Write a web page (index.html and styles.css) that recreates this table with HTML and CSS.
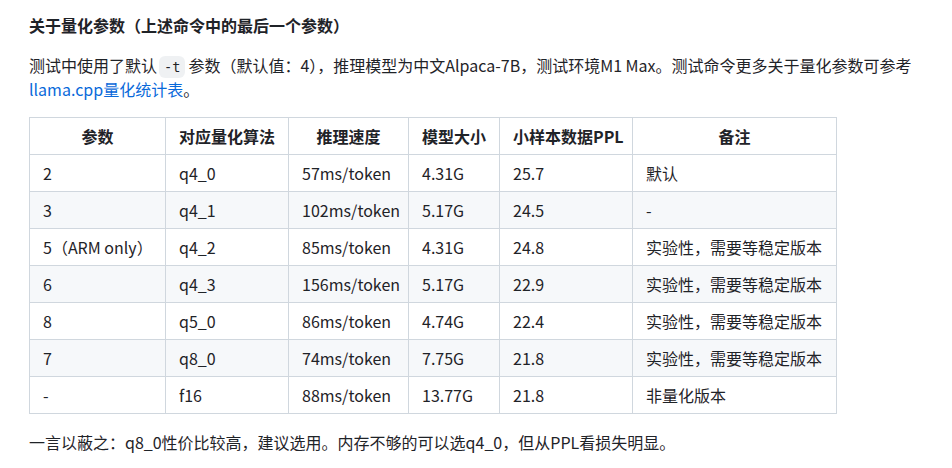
FILE: index.html
```html
<!DOCTYPE html>
<html lang="zh">
<head>
<meta charset="utf-8">
<link rel="stylesheet" href="styles.css">
</head>
<body>
<div class="markdown">
  <h4 class="title">关于量化参数（上述命令中的最后一个参数）</h4>
  <p class="para">测试中使用了默认<code class="code">-t</code>参数（默认值：4），推理模型为中文Alpaca-7B，测试环境M1 Max。测试命令更多关于量化参数可参考<a class="link" href="#">llama.cpp量化统计表</a>。</p>
  <table class="tbl">
    <colgroup>
      <col class="c1"><col class="c2"><col class="c3"><col class="c4"><col class="c5"><col class="c6">
    </colgroup>
    <thead>
      <tr><th>参数</th><th>对应量化算法</th><th>推理速度</th><th>模型大小</th><th>小样本数据PPL</th><th>备注</th></tr>
    </thead>
    <tbody>
      <tr><td>2</td><td>q4_0</td><td>57ms/token</td><td>4.31G</td><td>25.7</td><td>默认</td></tr>
      <tr><td>3</td><td>q4_1</td><td>102ms/token</td><td>5.17G</td><td>24.5</td><td>-</td></tr>
      <tr><td>5（ARM only）</td><td>q4_2</td><td>85ms/token</td><td>4.31G</td><td>24.8</td><td>实验性，需要等稳定版本</td></tr>
      <tr><td>6</td><td>q4_3</td><td>156ms/token</td><td>5.17G</td><td>22.9</td><td>实验性，需要等稳定版本</td></tr>
      <tr><td>8</td><td>q5_0</td><td>86ms/token</td><td>4.74G</td><td>22.4</td><td>实验性，需要等稳定版本</td></tr>
      <tr><td>7</td><td>q8_0</td><td>74ms/token</td><td>7.75G</td><td>21.8</td><td>实验性，需要等稳定版本</td></tr>
      <tr><td>-</td><td>f16</td><td>88ms/token</td><td>13.77G</td><td>21.8</td><td>非量化版本</td></tr>
    </tbody>
  </table>
  <p class="para">一言以蔽之：q8_0性价比较高，建议选用。内存不够的可以选q4_0，但从PPL看损失明显。</p>
</div>
</body>
</html>
```
FILE: styles.css
```css
html, body {
  margin: 0;
  padding: 0;
  background: #ffffff;
}
body {
  font-family: "Noto Sans CJK SC", "Noto Sans", sans-serif;
  font-size: 16px;
  line-height: 24px;
  color: #1f2328;
}
.markdown {
  padding: 13px 0 0 29px;
  width: 900px;
}
.title {
  margin: 0 0 16px 0;
  font-size: 16px;
  line-height: 24px;
  font-weight: 700;
}
.para {
  margin: 0 0 16px 0;
}
.code {
  font-family: "DejaVu Sans Mono", "Liberation Mono", monospace;
  font-size: 13.6px;
  line-height: 1;
  background: rgba(175, 184, 193, 0.2);
  border-radius: 6px;
  padding: 3px 5px;
  margin: 0 3px 0 2px;
}
.link {
  color: #0969da;
  text-decoration: none;
}
.tbl {
  border-collapse: collapse;
  border-spacing: 0;
  table-layout: fixed;
  width: 807px;
  margin: 0 0 16px 0;
}
.c1 { width: 136px; }
.c2 { width: 123px; }
.c3 { width: 120px; }
.c4 { width: 91px; }
.c5 { width: 133px; }
.c6 { width: 204px; }
.tbl th, .tbl td {
  border: 1px solid #d0d7de;
  padding: 6px 13px;
  height: 24px;
  white-space: nowrap;
}
.tbl th {
  font-weight: 700;
  text-align: center;
}
.tbl td {
  text-align: left;
}
.tbl tbody tr:nth-child(even) {
  background: #f6f8fa;
}
```
